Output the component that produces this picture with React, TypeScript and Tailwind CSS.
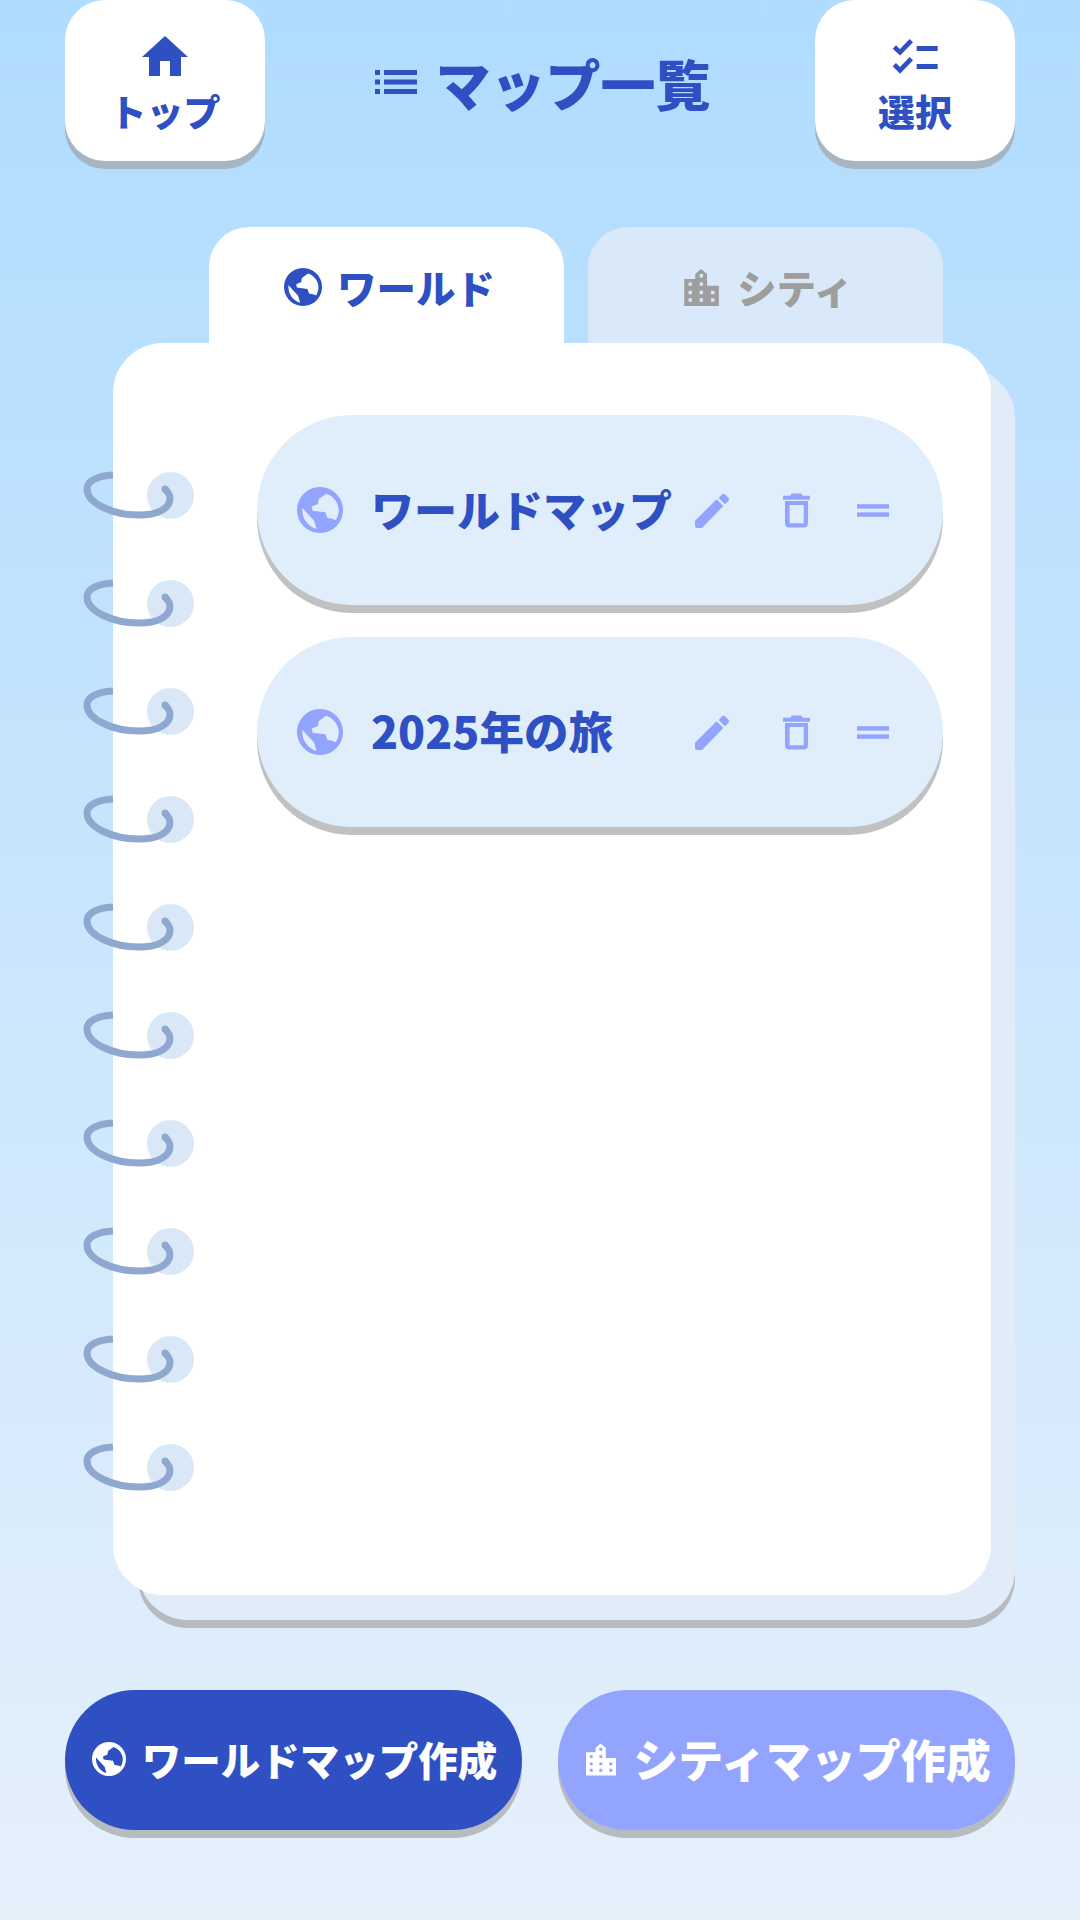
import React from 'react';

const font = { fontFamily: '"Noto Sans CJK JP", "Noto Sans", sans-serif' };
const dropShadow = 'shadow-[0_8px_0_rgba(160,160,160,0.65)]';

type IconProps = { className?: string };

const HomeIcon = ({ className }: IconProps) => (
  <svg viewBox="0 0 46 40" className={className} fill="currentColor">
    <path d="M23 0 L46 21 H39 V40 H28 V25 H18 V40 H7 V21 H0Z" />
  </svg>
);

const ListIcon = ({ className }: IconProps) => (
  <svg viewBox="0 0 42 24" className={className} fill="currentColor">
    <rect x="0" y="0" width="5" height="5" />
    <rect x="9" y="0" width="33" height="5" />
    <rect x="0" y="9.500" width="5" height="5" />
    <rect x="9" y="9.500" width="33" height="5" />
    <rect x="0" y="19" width="5" height="5" />
    <rect x="9" y="19" width="33" height="5" />
  </svg>
);

const CheckListIcon = ({ className }: IconProps) => (
  <svg viewBox="68 55 138 105" className={className}>
    <path d="M75 79 L92 95 L126 60 M75 132 L92 149 L126 114" fill="none" stroke="currentColor" strokeWidth="14" />
    <rect x="142" y="76" width="63" height="15" fill="currentColor" />
    <rect x="142" y="130" width="63" height="15" fill="currentColor" />
  </svg>
);

const GlobeIcon = ({ className }: IconProps) => (
  <svg viewBox="22 22 136 136" className={className} fill="currentColor" fillRule="evenodd">
    <path d="M90 22 a68 68 0 1 0 .01 0z M68 92 L66 80 L84 72 L86 58 L108 42 A52 52 0 0 1 137 120 L126 116 L112 114 L106 97Z M38 84 L62 110 L72 120 L80 146 A58 58 0 0 1 38 84Z" />
  </svg>
);

const CityIcon = ({ className }: IconProps) => (
  <svg viewBox="72 55 103 110" className={className} fill="currentColor" fillRule="evenodd">
    <path d="M72 85 H105 V70 L122 55 L140 70 V105 H175 V165 H72Z M118 70h10v10h-10z M85 95h10v10h-10z M118 95h10v10h-10z M85 120h10v10h-10z M118 120h10v10h-10z M152 120h10v10h-10z M85 142h10v10h-10z M118 142h10v10h-10z M152 142h10v10h-10z" />
  </svg>
);

const PencilIcon = ({ className }: IconProps) => (
  <svg viewBox="107 275 105 105" className={className} fill="currentColor">
    <path d="M107 358 L172 294 L192 314 L128 380 H113 Q107 380 107 374Z" />
    <path d="M178 290 L188 279 Q192 275 197 279 L207 289 Q212 294 207 299 L197 309Z" />
  </svg>
);

const TrashIcon = ({ className }: IconProps) => (
  <svg viewBox="368 276 82 104" className={className} fill="currentColor" fillRule="evenodd">
    <path d="M368 283 H390 L394 276 H424 L428 283 H450 V295 H368Z" />
    <path d="M374 299 H444 V366 Q444 380 430 380 H388 Q374 380 374 366Z M388 311 V367 H431 V311Z" />
  </svg>
);

const HandleIcon = ({ className }: IconProps) => (
  <svg viewBox="0 0 94 37" className={className} fill="currentColor">
    <rect x="0" y="0" width="94" height="13" />
    <rect x="0" y="24" width="94" height="13" />
  </svg>
);

const Ring = () => (
  <div className="relative h-[47px] w-[47px] rounded-full bg-[#dae7f6]">
    <svg viewBox="-70 0 100 60" className="absolute left-[-70px] top-[-1px] h-[60px] w-[100px]" fill="none" stroke="#8ea8cf" strokeWidth="7">
      <path d="M-34 4 C-50 5 -60 10 -60 18 C-60 32 -35 44 -8 44 C12 44 23 37 23 27 C23 24 21 21 18 18" />
      <circle cx="18" cy="18" r="3.500" fill="#8ea8cf" stroke="none" />
    </svg>
  </div>
);

const MapRow = ({ name, textClass }: { name: string; textClass: string }) => (
  <div className={`flex h-[190px] items-center rounded-[95px] bg-[#e0eefc] pl-[40px] pr-[54px] text-[#93a4ff] ${dropShadow}`}>
    <GlobeIcon className="h-[46px] w-[46px] shrink-0" />
    <span className={`ml-[28px] pb-[4px] font-black leading-none text-[#2f50c2] ${textClass}`}>{name}</span>
    <PencilIcon className="ml-auto h-[35px] w-[35px]" />
    <TrashIcon className="ml-[53px] h-[35px] w-[27px]" />
    <HandleIcon className="ml-[47px] h-[13px] w-[32px]" />
  </div>
);

export default function App() {
  return (
    <div style={font} className="flex h-[1920px] w-[1080px] flex-col overflow-hidden bg-gradient-to-b from-[#afdcff] to-[#e6f0fb]">
      <header className="flex items-center justify-between px-[65px]">
        <button className={`flex h-[161px] w-[200px] flex-col items-center rounded-[40px] bg-white pt-[36px] text-[#2f50c2] ${dropShadow}`}>
          <HomeIcon className="h-[40px] w-[46px]" />
          <span className="mt-[10px] text-[37px] font-black leading-[50px]">トップ</span>
        </button>
        <h1 className="ml-[6px] flex items-center pt-[3px] text-[55px] font-black leading-none text-[#2f50c2]">
          <ListIcon className="mr-[18px] h-[24px] w-[42px]" />
          マップ一覧
        </h1>
        <button className={`flex h-[161px] w-[200px] flex-col items-center rounded-[40px] bg-white pt-[39px] text-[#2f50c2] ${dropShadow}`}>
          <CheckListIcon className="h-[35px] w-[46px]" />
          <span className="mt-[12px] text-[37px] font-black leading-[50px]">選択</span>
        </button>
      </header>

      <div className="mt-[66px] flex gap-[24px] pl-[209px]">
        <div className="flex h-[116px] w-[355px] items-center justify-center gap-[15px] rounded-t-[40px] bg-white pl-[6px] pt-[4px] text-[39.5px] font-black text-[#2f50c2]">
          <GlobeIcon className="h-[38px] w-[38px]" />
          ワールド
        </div>
        <div className="flex h-[116px] w-[355px] items-center justify-center gap-[18px] rounded-t-[40px] bg-[#d9e9fa] pl-[6px] pt-[4px] text-[39.5px] font-black text-[#9e9e9e]">
          <CityIcon className="h-[37px] w-[35px]" />
          シティ
        </div>
      </div>

      <div className="relative ml-[113px] h-[1252px] w-[878px]">
        <div className={`absolute left-[25px] top-[25px] h-full w-[877px] rounded-[50px] bg-[#e2ecf9] ${dropShadow}`} />
        <div className="relative flex h-full flex-col gap-[32px] rounded-[50px] bg-white pl-[144px] pr-[48px] pt-[72px]">
          <MapRow name="ワールドマップ" textClass="text-[43px]" />
          <MapRow name="2025年の旅" textClass="text-[44.5px]" />
        </div>
        <div className="absolute left-[34px] top-[129px] flex flex-col gap-[61px]">
          {Array.from({ length: 10 }).map((_, i) => (
            <Ring key={i} />
          ))}
        </div>
      </div>

      <div className="mt-[95px] flex justify-between px-[65px]">
        <button className={`flex h-[140px] w-[457px] items-center justify-center gap-[16px] rounded-[70px] bg-[#2f50c2] pb-[2px] pl-[2px] text-[39.5px] font-black text-white ${dropShadow}`}>
          <GlobeIcon className="h-[34px] w-[34px]" />
          ワールドマップ作成
        </button>
        <button className={`flex h-[140px] w-[457px] items-center justify-center gap-[17px] rounded-[70px] bg-[#93a4ff] pb-[2px] pl-[4px] text-[45px] font-black text-white ${dropShadow}`}>
          <CityIcon className="h-[33px] w-[30px]" />
          シティマップ作成
        </button>
      </div>
    </div>
  );
}
